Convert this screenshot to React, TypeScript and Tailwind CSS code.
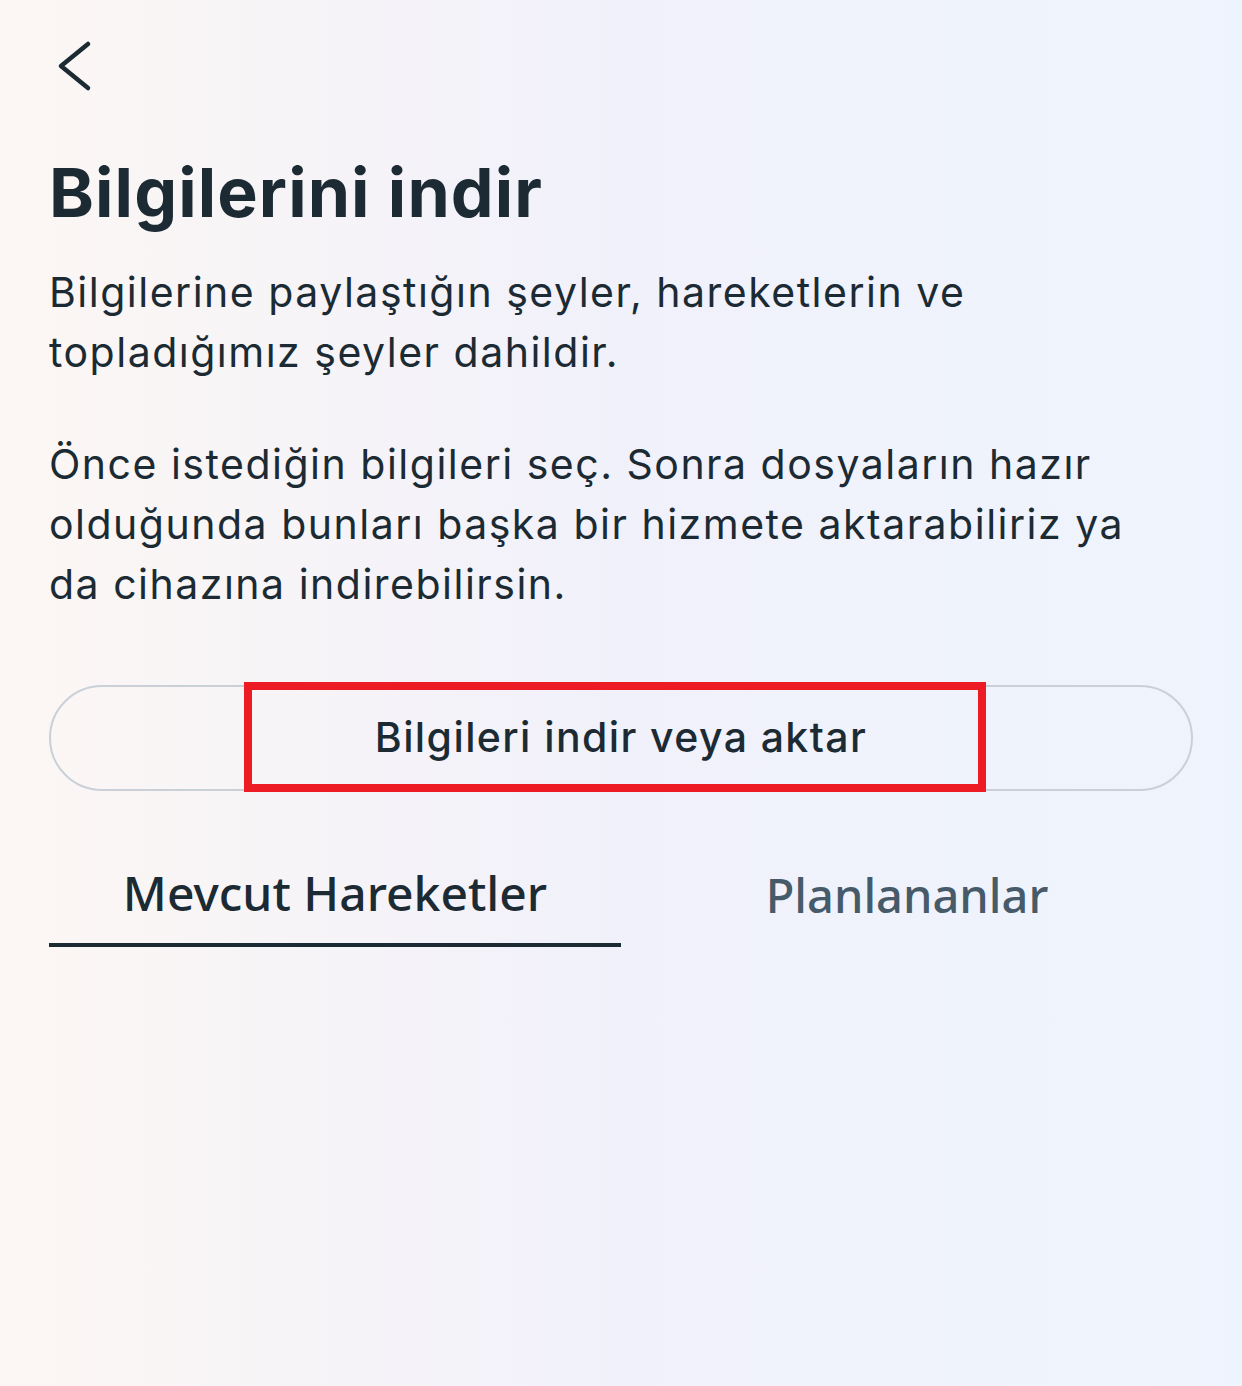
export default function App() {
  return (
    <div
      className="w-[1242px] h-[1386px] bg-gradient-to-r from-[#fcf7f4] via-[#f1f1fb] to-[#eef4fd] text-[#1c2b33] overflow-hidden"
      style={{ fontFamily: "Inter, 'Noto Sans', sans-serif" }}
    >
      <div className="px-[49px] pt-[36px]">
        {/* back */}
        <button className="block w-[60px] h-[60px]">
          <svg width="60" height="60" viewBox="0 0 60 60" fill="none">
            <path d="M39 8 L12 30 L39 52" stroke="#1c2b33" strokeWidth="4.5" strokeLinecap="round" strokeLinejoin="round" />
          </svg>
        </button>

        <h1 className="mt-[56px] text-[68px] leading-[80px] font-bold tracking-[1.1px]">Bilgilerini indir</h1>

        <p className="mt-[30px] text-[41px] leading-[60px] tracking-[1.5px]">
          Bilgilerine paylaştığın şeyler, hareketlerin ve topladığımız şeyler dahildir.
        </p>
        <p className="mt-[52px] max-w-[1110px] text-[41px] leading-[60px] tracking-[1.5px]">
          Önce istediğin bilgileri seç. Sonra dosyaların hazır olduğunda bunları başka bir hizmete aktarabiliriz ya da cihazına indirebilirsin.
        </p>

        {/* button */}
        <div className="relative mt-[71px]">
          <button className="w-full h-[106px] rounded-full border-2 border-[#c9d0d7] flex items-center justify-center text-[41px] font-medium tracking-[1.4px] text-[#1c2b33]">
            Bilgileri indir veya aktar
          </button>
          <div className="absolute left-[195px] top-[-3px] w-[742px] h-[110px] border-[8px] border-[#ed1c24] pointer-events-none" />
        </div>

        {/* tabs */}
        <div className="mt-[52px] grid grid-cols-2" style={{ fontFamily: "'Noto Sans', sans-serif" }}>
          <div className="h-[104px] flex items-center justify-center text-[48px] font-medium border-b-[4px] border-[#1c2b33]">
            Mevcut Hareketler
          </div>
          <div className="h-[104px] flex items-center justify-center text-[47px] font-medium text-[#465a69]">
            Planlananlar
          </div>
        </div>
      </div>
    </div>
  );
}
